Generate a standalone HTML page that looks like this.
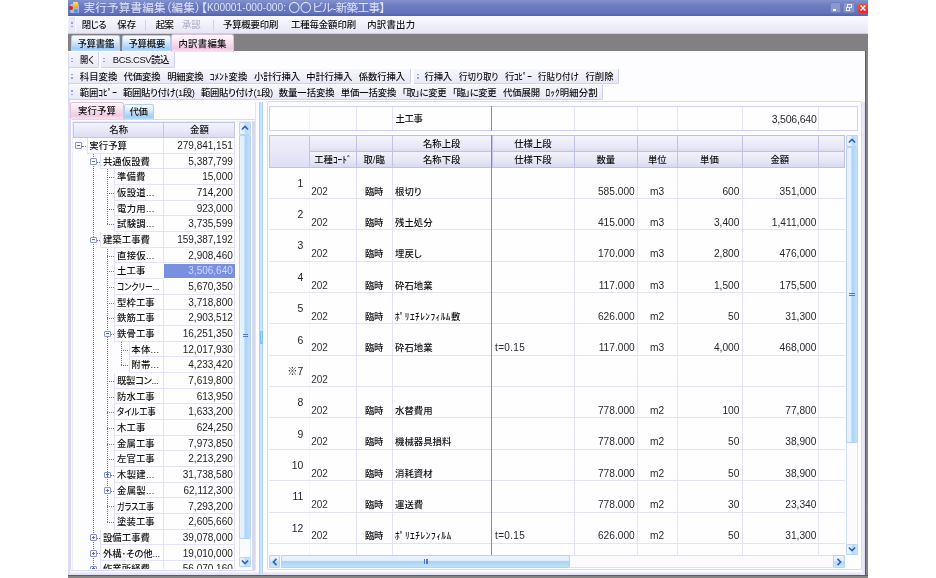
<!DOCTYPE html>
<html lang="ja"><head><meta charset="utf-8"><title>実行予算書編集</title>
<style>
html,body{margin:0;padding:0;background:#fff;}
body{width:936px;height:578px;position:relative;overflow:hidden;font-family:"Liberation Sans","Noto Sans CJK JP",sans-serif;}
div,span,svg{position:absolute;display:block;}
.t{white-space:nowrap;font-size:9.4px;line-height:14px;font-feature-settings:"palt";font-weight:500;}
.n{font-weight:400;}
.n{font-family:"Liberation Sans","Noto Sans CJK JP",sans-serif;}
</style></head>
<body>
<div id="root" style="left:0;top:0;width:936px;height:578px;filter:blur(0.4px);">
<div style="left:68px;top:0px;width:800px;height:578px;background:#868486;"></div>
<div style="left:68px;top:33.6px;width:800px;height:18px;background:#828082;"></div>
<div style="left:864.8px;top:51.3px;width:1.3px;height:524.7px;background:#5e5c5e;"></div>
<div style="left:68px;top:574.8px;width:800px;height:1.2px;background:#5e5c5e;"></div>
<div style="left:68px;top:51.3px;width:796.9px;height:523.5px;background:#fdfcff;"></div>
<div style="left:68px;top:571.8px;width:796.6px;height:3px;background:linear-gradient(#f1f1fb,#dedef4);"></div>
<div style="left:861.2px;top:102px;width:3.4px;height:472.8px;background:linear-gradient(90deg,#f3f3fc,#dedef4);"></div>
<div style="left:68px;top:51.5px;width:1.6px;height:523px;background:#dcdcf3;"></div>
<div style="left:68px;top:0px;width:800px;height:16.4px;background:linear-gradient(#8392cd 0%,#6d7cc0 35%,#6373ba 80%,#5161ad 100%);"></div>
<div style="left:69.6px;top:3.5px;width:9px;height:9.5px;background:#a9b6dc;border-radius:1px;"></div>
<div style="left:73.3px;top:2.2px;width:5.2px;height:5.6px;background:linear-gradient(#ffe860,#f4a400);border-radius:1px;"></div>
<div style="left:69.2px;top:5.6px;width:4.2px;height:4.6px;background:#d8281c;border-radius:50%;"></div>
<div style="left:73.6px;top:9px;width:4px;height:4px;background:#3f94f0;border-radius:50%;"></div>
<span id="t1" class="t" style="left:83.4px;top:0.6px;font-size:11.6px;line-height:14px;color:#dde2f6;letter-spacing:0.16px;font-weight:400;">実行予算書編集（編集）【</span>
<span id="t2" class="t" style="left:207px;top:0.9px;font-size:10.2px;line-height:14px;color:#dde2f6;letter-spacing:0.02px;font-weight:400;">K00001-000-000:</span>
<span id="t3" class="t" style="left:288.4px;top:0.6px;font-size:11.6px;line-height:14px;color:#dde2f6;letter-spacing:-0px;font-weight:400;">〇〇</span>
<span id="t4" class="t" style="left:312.2px;top:0.6px;font-size:11.6px;line-height:14px;color:#dde2f6;letter-spacing:-0.63px;font-weight:400;">ビル-新築工事】</span>
<div style="left:830px;top:2.2px;width:11px;height:10.5px;background:#8b97cf;border:1px solid #7380c0;border-radius:2px;box-sizing:border-box;"></div>
<div style="left:832.6px;top:9.3px;width:3.8px;height:1.4px;background:#f0f2fb;"></div>
<div style="left:843.2px;top:2.2px;width:11.6px;height:10.5px;background:#8b97cf;border:1px solid #7380c0;border-radius:2px;box-sizing:border-box;"></div>
<div style="left:847.4px;top:4.2px;width:4.6px;height:3.8px;border:0.9px solid #e8ebf8;border-top-width:1.4px;box-sizing:border-box;"></div>
<div style="left:845.6px;top:6.6px;width:4.6px;height:4px;border:0.9px solid #e8ebf8;border-top-width:1.4px;box-sizing:border-box;background:#7c88c6;"></div>
<div style="left:858px;top:2.6px;width:10px;height:10px;background:linear-gradient(#f4574d,#e8281e);border-radius:2px 0 0 2px;"></div>
<svg style="left:860.2px;top:4.6px;width:6px;height:6px" viewBox="0 0 6 6"><path d="M0.6 0.6L5.4 5.4M5.4 0.6L0.6 5.4" stroke="#fff" stroke-width="1.35" fill="none"/></svg>
<div style="left:68px;top:16.4px;width:800px;height:17.2px;background:linear-gradient(#f9f9fe 0%,#f0f0fb 50%,#e6e6f7 100%);border-bottom:1px solid #c9cbe9;box-sizing:border-box;"></div>
<div style="left:68.6px;top:17.4px;width:6.6px;height:15px;background:#e7e7f7;border-right:1px solid #f8f8ff;"></div>
<div style="left:70.8px;top:22.4px;width:2px;height:1.5px;background:#97a4de;"></div>
<div style="left:70.8px;top:25.8px;width:2px;height:1.5px;background:#97a4de;"></div>
<span id="t5" class="t" style="left:81.8px;top:18.2px;font-size:9.4px;line-height:14px;color:#111;letter-spacing:-0.63px;">閉じる</span>
<span id="t6" class="t" style="left:117.3px;top:18.2px;font-size:9.4px;line-height:14px;color:#111;letter-spacing:-0.04px;">保存</span>
<span id="t7" class="t" style="left:155.8px;top:18.2px;font-size:9.4px;line-height:14px;color:#111;letter-spacing:-0.64px;">起案</span>
<span id="t8" class="t" style="left:182px;top:18.2px;font-size:9.4px;line-height:14px;color:#b4b4c8;letter-spacing:-0.11px;">承認</span>
<span id="t9" class="t" style="left:223px;top:18.2px;font-size:9.4px;line-height:14px;color:#111;letter-spacing:-0.19px;">予算概要印刷</span>
<span id="t10" class="t" style="left:291px;top:18.2px;font-size:9.4px;line-height:14px;color:#111;letter-spacing:-0.1px;">工種毎金額印刷</span>
<span id="t11" class="t" style="left:367.2px;top:18.2px;font-size:9.4px;line-height:14px;color:#111;letter-spacing:0.27px;">内訳書出力</span>
<div style="left:145.2px;top:19.5px;width:1px;height:11.5px;background:#cfd1ea;"></div>
<div style="left:212.6px;top:19.5px;width:1px;height:11.5px;background:#cfd1ea;"></div>
<div style="left:71px;top:35.2px;width:49.4px;height:16.3px;background:linear-gradient(#fbfdff 0%,#dcecfd 35%,#9fcdf8 85%,#badcfa 100%);border:1px solid #b4d0ee;border-bottom:none;border-radius:2.5px 2.5px 0 0;box-sizing:border-box;"></div>
<span id="t12" class="t" style="left:77.4px;top:36.75px;font-size:9.4px;line-height:14px;color:#111;letter-spacing:-0.15px;">予算書鑑</span>
<div style="left:122px;top:35.2px;width:49.2px;height:16.3px;background:linear-gradient(#fbfdff 0%,#dcecfd 35%,#9fcdf8 85%,#badcfa 100%);border:1px solid #b4d0ee;border-bottom:none;border-radius:2.5px 2.5px 0 0;box-sizing:border-box;"></div>
<span id="t13" class="t" style="left:128.4px;top:36.75px;font-size:9.4px;line-height:14px;color:#111;letter-spacing:-0.2px;">予算概要</span>
<div style="left:171.2px;top:34.2px;width:62.8px;height:17.9px;background:linear-gradient(#fffafd 0%,#f8e2f1 40%,#f0c9e3 80%,#f8e4f2 100%);border:1px solid #e0c0d8;border-bottom:none;border-radius:2.5px 2.5px 0 0;box-sizing:border-box;"></div>
<span id="t14" class="t" style="left:178.4px;top:36.55px;font-size:9.4px;line-height:14px;color:#111;letter-spacing:0.29px;">内訳書編集</span>
<div style="left:68.6px;top:52.4px;width:30.2px;height:15.4px;background:linear-gradient(#f6f6fd,#e9e9f8);border-right:1px solid #cfd0ec;border-bottom:1px solid #cfd0ec;box-sizing:border-box;border-radius:0 0 2px 0;"></div>
<div style="left:71px;top:57.5px;width:2px;height:1.5px;background:#97a4de;"></div>
<div style="left:71px;top:60.9px;width:2px;height:1.5px;background:#97a4de;"></div>
<div style="left:101px;top:52.4px;width:73.8px;height:15.4px;background:linear-gradient(#f6f6fd,#e9e9f8);border-right:1px solid #cfd0ec;border-bottom:1px solid #cfd0ec;box-sizing:border-box;border-radius:0 0 2px 0;"></div>
<div style="left:103.4px;top:57.5px;width:2px;height:1.5px;background:#97a4de;"></div>
<div style="left:103.4px;top:60.9px;width:2px;height:1.5px;background:#97a4de;"></div>
<span id="t15" class="t" style="left:79.6px;top:53.2px;font-size:9.4px;line-height:14px;color:#111;transform:scaleX(0.885);transform-origin:0 50%;">開く</span>
<span id="t16" class="t" style="left:112.8px;top:53.2px;font-size:9.4px;line-height:14px;color:#111;letter-spacing:-0.41px;">BCS.CSV読込</span>
<div style="left:68.6px;top:68.8px;width:342.8px;height:15.4px;background:linear-gradient(#f6f6fd,#e9e9f8);border-right:1px solid #cfd0ec;border-bottom:1px solid #cfd0ec;box-sizing:border-box;border-radius:0 0 2px 0;"></div>
<div style="left:71px;top:73.9px;width:2px;height:1.5px;background:#97a4de;"></div>
<div style="left:71px;top:77.3px;width:2px;height:1.5px;background:#97a4de;"></div>
<div style="left:414.4px;top:68.8px;width:204.4px;height:15.4px;background:linear-gradient(#f6f6fd,#e9e9f8);border-right:1px solid #cfd0ec;border-bottom:1px solid #cfd0ec;box-sizing:border-box;border-radius:0 0 2px 0;"></div>
<div style="left:416.8px;top:73.9px;width:2px;height:1.5px;background:#97a4de;"></div>
<div style="left:416.8px;top:77.3px;width:2px;height:1.5px;background:#97a4de;"></div>
<span id="t17" class="t" style="left:79.8px;top:69.6px;font-size:9.4px;line-height:14px;color:#111;letter-spacing:-0px;">科目変換</span>
<span id="t18" class="t" style="left:123.5px;top:69.6px;font-size:9.4px;line-height:14px;color:#111;letter-spacing:-0.12px;">代価変換</span>
<span id="t19" class="t" style="left:167.2px;top:69.6px;font-size:9.4px;line-height:14px;color:#111;letter-spacing:-0.32px;">明細変換</span>
<span id="t20" class="t" style="left:209.8px;top:69.6px;font-size:9.4px;line-height:14px;color:#111;letter-spacing:0.01px;">ｺﾒﾝﾄ変換</span>
<span id="t21" class="t" style="left:254px;top:69.6px;font-size:9.4px;line-height:14px;color:#111;letter-spacing:-0.2px;">小計行挿入</span>
<span id="t22" class="t" style="left:306.3px;top:69.6px;font-size:9.4px;line-height:14px;color:#111;letter-spacing:-0.22px;">中計行挿入</span>
<span id="t23" class="t" style="left:358.8px;top:69.6px;font-size:9.4px;line-height:14px;color:#111;letter-spacing:-0.11px;">係数行挿入</span>
<span id="t24" class="t" style="left:424.6px;top:69.6px;font-size:9.4px;line-height:14px;color:#111;letter-spacing:-0.3px;">行挿入</span>
<span id="t25" class="t" style="left:458.8px;top:69.6px;font-size:9.4px;line-height:14px;color:#111;transform:scaleX(0.901);transform-origin:0 50%;">行切り取り</span>
<span id="t26" class="t" style="left:505px;top:69.6px;font-size:9.4px;line-height:14px;color:#111;letter-spacing:-0.39px;">行ｺﾋﾟｰ</span>
<span id="t27" class="t" style="left:538px;top:69.6px;font-size:9.4px;line-height:14px;color:#111;transform:scaleX(0.905);transform-origin:0 50%;">行貼り付け</span>
<span id="t28" class="t" style="left:585.4px;top:69.6px;font-size:9.4px;line-height:14px;color:#111;letter-spacing:0.02px;">行削除</span>
<div style="left:68.6px;top:85.2px;width:534.6px;height:15.2px;background:linear-gradient(#f6f6fd,#e9e9f8);border-right:1px solid #cfd0ec;border-bottom:1px solid #cfd0ec;box-sizing:border-box;border-radius:0 0 2px 0;"></div>
<div style="left:71px;top:90.2px;width:2px;height:1.5px;background:#97a4de;"></div>
<div style="left:71px;top:93.6px;width:2px;height:1.5px;background:#97a4de;"></div>
<span id="t29" class="t" style="left:79.8px;top:85.8px;font-size:9.4px;line-height:14px;color:#111;letter-spacing:-0.09px;">範囲ｺﾋﾟｰ</span>
<span id="t30" class="t" style="left:123px;top:85.8px;font-size:9.4px;line-height:14px;color:#111;letter-spacing:-0.37px;">範囲貼り付け(1段)</span>
<span id="t31" class="t" style="left:201px;top:85.8px;font-size:9.4px;line-height:14px;color:#111;letter-spacing:-0.34px;">範囲貼り付け(1段)</span>
<span id="t32" class="t" style="left:278.8px;top:85.8px;font-size:9.4px;line-height:14px;color:#111;letter-spacing:-0.09px;">数量一括変換</span>
<span id="t33" class="t" style="left:340.8px;top:85.8px;font-size:9.4px;line-height:14px;color:#111;letter-spacing:-0.12px;">単価一括変換</span>
<span id="t34" class="t" style="left:402px;top:85.8px;font-size:9.4px;line-height:14px;color:#111;letter-spacing:-0.39px;">「取」に変更</span>
<span id="t35" class="t" style="left:452.4px;top:85.8px;font-size:9.4px;line-height:14px;color:#111;letter-spacing:-0.46px;">「臨」に変更</span>
<span id="t36" class="t" style="left:503px;top:85.8px;font-size:9.4px;line-height:14px;color:#111;letter-spacing:-0.15px;">代価展開</span>
<span id="t37" class="t" style="left:545.4px;top:85.8px;font-size:9.4px;line-height:14px;color:#111;letter-spacing:0.1px;">ﾛｯｸ明細分割</span>
<div style="left:70.4px;top:102.2px;width:54px;height:16.8px;background:linear-gradient(#fffafd 0%,#f8e2f1 40%,#f0c9e3 80%,#f8e4f2 100%);border:1px solid #e0c0d8;border-bottom:none;border-radius:2.5px 2.5px 0 0;box-sizing:border-box;"></div>
<span id="t38" class="t" style="left:78px;top:104px;font-size:9.4px;line-height:14px;color:#111;letter-spacing:0.14px;">実行予算</span>
<div style="left:124.4px;top:104px;width:30px;height:15px;background:linear-gradient(#fbfdff 0%,#dcecfd 35%,#9fcdf8 85%,#badcfa 100%);border:1px solid #b4d0ee;border-bottom:none;border-radius:2.5px 2.5px 0 0;box-sizing:border-box;"></div>
<span id="t39" class="t" style="left:129.4px;top:104.9px;font-size:9.4px;line-height:14px;color:#111;letter-spacing:-0.24px;">代価</span>
<div style="left:70px;top:119px;width:186.4px;height:452px;border:1.6px solid #d9d9f3;box-sizing:border-box;background:#fdfcff;border-radius:2px;"></div>
<div style="left:71.6px;top:120.6px;width:183.2px;height:449px;border:1px solid #ededfa;border-bottom:none;box-sizing:border-box;"></div>
<div style="left:73.4px;top:122.3px;width:90.6px;height:15.5px;background:linear-gradient(#f4f4fc 0%,#e9e9f8 50%,#dcdcf2 100%);border:1px solid #c3c6e6;box-sizing:border-box;"></div>
<div style="left:163px;top:122.3px;width:72px;height:15.5px;background:linear-gradient(#f4f4fc 0%,#e9e9f8 50%,#dcdcf2 100%);border:1px solid #c3c6e6;box-sizing:border-box;"></div>
<span id="t40" class="t" style="left:73.4px;top:123px;font-size:9.4px;line-height:14px;color:#111;width:90.6px;text-align:center;">名称</span>
<span id="t41" class="t" style="left:164px;top:123px;font-size:9.4px;line-height:14px;color:#111;width:71px;text-align:center;">金額</span>
<div style="left:0;top:0;width:936px;height:568.7px;overflow:hidden;">
<div style="left:93.4px;top:150.05px;width:0px;height:418.93px;border-left:1px dotted #77777f;"></div>
<div style="left:107.2px;top:165.72px;width:0px;height:58.52px;border-left:1px dotted #77777f;"></div>
<div style="left:107.2px;top:244.07px;width:0px;height:277.89px;border-left:1px dotted #77777f;"></div>
<div style="left:121.4px;top:338.09px;width:0px;height:27.17px;border-left:1px dotted #77777f;"></div>
<div style="left:86.6px;top:138.05px;width:77.4px;height:15.67px;border-left:1px solid #e2e2f8;border-bottom:1px solid #e2e2f8;box-sizing:border-box;background:#fefdff;"></div>
<div style="left:163px;top:138.05px;width:72px;height:15.67px;border:1px solid #e2e2f8;border-top:none;box-sizing:border-box;background:#fefdff;"></div>
<div style="left:75.2px;top:142.49px;width:6.8px;height:6.8px;border:1px solid #8a93d2;background:#fbfbff;box-sizing:border-box;border-radius:1px;"></div>
<div style="left:77px;top:145.39px;width:3.2px;height:1px;background:#5a66b8;"></div>
<div style="left:82.2px;top:145.89px;width:4px;height:0px;border-top:1px dotted #77777f;"></div>
<span id="t42" class="t" style="left:89.3px;top:139.09px;font-size:9.4px;line-height:14px;color:#111;letter-spacing:0.05px;">実行予算</span>
<span id="t43" class="t n" style="left:164px;top:139.09px;font-size:10px;line-height:14px;color:#222;width:68.8px;text-align:right;">279,841,151</span>
<div style="left:100.2px;top:153.72px;width:63.8px;height:15.67px;border-left:1px solid #e2e2f8;border-bottom:1px solid #e2e2f8;box-sizing:border-box;background:#fefdff;"></div>
<div style="left:163px;top:153.72px;width:72px;height:15.67px;border:1px solid #e2e2f8;border-top:none;box-sizing:border-box;background:#fefdff;"></div>
<div style="left:93.4px;top:161.56px;width:6.3px;height:0px;border-top:1px dotted #77777f;"></div>
<div style="left:90.2px;top:158.16px;width:6.8px;height:6.8px;border:1px solid #8a93d2;background:#fbfbff;box-sizing:border-box;border-radius:1px;"></div>
<div style="left:92px;top:161.06px;width:3.2px;height:1px;background:#5a66b8;"></div>
<span id="t44" class="t" style="left:102.9px;top:154.75px;font-size:9.4px;line-height:14px;color:#111;letter-spacing:0.05px;">共通仮設費</span>
<span id="t45" class="t n" style="left:164px;top:154.75px;font-size:10px;line-height:14px;color:#222;width:68.8px;text-align:right;">5,387,799</span>
<div style="left:114.4px;top:169.39px;width:49.6px;height:15.67px;border-left:1px solid #e2e2f8;border-bottom:1px solid #e2e2f8;box-sizing:border-box;background:#fefdff;"></div>
<div style="left:163px;top:169.39px;width:72px;height:15.67px;border:1px solid #e2e2f8;border-top:none;box-sizing:border-box;background:#fefdff;"></div>
<div style="left:107.2px;top:177.23px;width:6.7px;height:0px;border-top:1px dotted #77777f;"></div>
<span id="t46" class="t" style="left:117.1px;top:170.43px;font-size:9.4px;line-height:14px;color:#111;letter-spacing:0.05px;">準備費</span>
<span id="t47" class="t n" style="left:164px;top:170.43px;font-size:10px;line-height:14px;color:#222;width:68.8px;text-align:right;">15,000</span>
<div style="left:114.4px;top:185.06px;width:49.6px;height:15.67px;border-left:1px solid #e2e2f8;border-bottom:1px solid #e2e2f8;box-sizing:border-box;background:#fefdff;"></div>
<div style="left:163px;top:185.06px;width:72px;height:15.67px;border:1px solid #e2e2f8;border-top:none;box-sizing:border-box;background:#fefdff;"></div>
<div style="left:107.2px;top:192.9px;width:6.7px;height:0px;border-top:1px dotted #77777f;"></div>
<span id="t48" class="t" style="left:117.1px;top:186.09px;font-size:9.4px;line-height:14px;color:#111;letter-spacing:0.24px;">仮設道...</span>
<span id="t49" class="t n" style="left:164px;top:186.09px;font-size:10px;line-height:14px;color:#222;width:68.8px;text-align:right;">714,200</span>
<div style="left:114.4px;top:200.73px;width:49.6px;height:15.67px;border-left:1px solid #e2e2f8;border-bottom:1px solid #e2e2f8;box-sizing:border-box;background:#fefdff;"></div>
<div style="left:163px;top:200.73px;width:72px;height:15.67px;border:1px solid #e2e2f8;border-top:none;box-sizing:border-box;background:#fefdff;"></div>
<div style="left:107.2px;top:208.57px;width:6.7px;height:0px;border-top:1px dotted #77777f;"></div>
<span id="t50" class="t" style="left:117.1px;top:201.77px;font-size:9.4px;line-height:14px;color:#111;letter-spacing:0.24px;">電力用...</span>
<span id="t51" class="t n" style="left:164px;top:201.77px;font-size:10px;line-height:14px;color:#222;width:68.8px;text-align:right;">923,000</span>
<div style="left:114.4px;top:216.4px;width:49.6px;height:15.67px;border-left:1px solid #e2e2f8;border-bottom:1px solid #e2e2f8;box-sizing:border-box;background:#fefdff;"></div>
<div style="left:163px;top:216.4px;width:72px;height:15.67px;border:1px solid #e2e2f8;border-top:none;box-sizing:border-box;background:#fefdff;"></div>
<div style="left:107.2px;top:224.24px;width:6.7px;height:0px;border-top:1px dotted #77777f;"></div>
<span id="t52" class="t" style="left:117.1px;top:217.44px;font-size:9.4px;line-height:14px;color:#111;letter-spacing:0.24px;">試験調...</span>
<span id="t53" class="t n" style="left:164px;top:217.44px;font-size:10px;line-height:14px;color:#222;width:68.8px;text-align:right;">3,735,599</span>
<div style="left:100.2px;top:232.07px;width:63.8px;height:15.67px;border-left:1px solid #e2e2f8;border-bottom:1px solid #e2e2f8;box-sizing:border-box;background:#fefdff;"></div>
<div style="left:163px;top:232.07px;width:72px;height:15.67px;border:1px solid #e2e2f8;border-top:none;box-sizing:border-box;background:#fefdff;"></div>
<div style="left:93.4px;top:239.91px;width:6.3px;height:0px;border-top:1px dotted #77777f;"></div>
<div style="left:90.2px;top:236.5px;width:6.8px;height:6.8px;border:1px solid #8a93d2;background:#fbfbff;box-sizing:border-box;border-radius:1px;"></div>
<div style="left:92px;top:239.41px;width:3.2px;height:1px;background:#5a66b8;"></div>
<span id="t54" class="t" style="left:102.9px;top:233.1px;font-size:9.4px;line-height:14px;color:#111;letter-spacing:0.05px;">建築工事費</span>
<span id="t55" class="t n" style="left:164px;top:233.1px;font-size:10px;line-height:14px;color:#222;width:68.8px;text-align:right;">159,387,192</span>
<div style="left:114.4px;top:247.74px;width:49.6px;height:15.67px;border-left:1px solid #e2e2f8;border-bottom:1px solid #e2e2f8;box-sizing:border-box;background:#fefdff;"></div>
<div style="left:163px;top:247.74px;width:72px;height:15.67px;border:1px solid #e2e2f8;border-top:none;box-sizing:border-box;background:#fefdff;"></div>
<div style="left:107.2px;top:255.58px;width:6.7px;height:0px;border-top:1px dotted #77777f;"></div>
<span id="t56" class="t" style="left:117.1px;top:248.78px;font-size:9.4px;line-height:14px;color:#111;letter-spacing:0.24px;">直接仮...</span>
<span id="t57" class="t n" style="left:164px;top:248.78px;font-size:10px;line-height:14px;color:#222;width:68.8px;text-align:right;">2,908,460</span>
<div style="left:114.4px;top:263.41px;width:49.6px;height:15.67px;border-left:1px solid #e2e2f8;border-bottom:1px solid #e2e2f8;box-sizing:border-box;background:#fefdff;"></div>
<div style="left:164.4px;top:263.61px;width:70.8px;height:14.77px;background:#7990e0;"></div>
<div style="left:107.2px;top:271.25px;width:6.7px;height:0px;border-top:1px dotted #77777f;"></div>
<span id="t58" class="t" style="left:117.1px;top:264.44px;font-size:9.4px;line-height:14px;color:#111;letter-spacing:0.05px;">土工事</span>
<span id="t59" class="t n" style="left:164px;top:264.44px;font-size:10px;line-height:14px;color:#d0d9fc;width:68.8px;text-align:right;">3,506,640</span>
<div style="left:114.4px;top:279.08px;width:49.6px;height:15.67px;border-left:1px solid #e2e2f8;border-bottom:1px solid #e2e2f8;box-sizing:border-box;background:#fefdff;"></div>
<div style="left:163px;top:279.08px;width:72px;height:15.67px;border:1px solid #e2e2f8;border-top:none;box-sizing:border-box;background:#fefdff;"></div>
<div style="left:107.2px;top:286.92px;width:6.7px;height:0px;border-top:1px dotted #77777f;"></div>
<span id="t60" class="t" style="left:117.1px;top:280.12px;font-size:9.4px;line-height:14px;color:#111;transform:scaleX(0.840);transform-origin:0 50%;">コンクリー...</span>
<span id="t61" class="t n" style="left:164px;top:280.12px;font-size:10px;line-height:14px;color:#222;width:68.8px;text-align:right;">5,670,350</span>
<div style="left:114.4px;top:294.75px;width:49.6px;height:15.67px;border-left:1px solid #e2e2f8;border-bottom:1px solid #e2e2f8;box-sizing:border-box;background:#fefdff;"></div>
<div style="left:163px;top:294.75px;width:72px;height:15.67px;border:1px solid #e2e2f8;border-top:none;box-sizing:border-box;background:#fefdff;"></div>
<div style="left:107.2px;top:302.58px;width:6.7px;height:0px;border-top:1px dotted #77777f;"></div>
<span id="t62" class="t" style="left:117.1px;top:295.78px;font-size:9.4px;line-height:14px;color:#111;letter-spacing:0.05px;">型枠工事</span>
<span id="t63" class="t n" style="left:164px;top:295.78px;font-size:10px;line-height:14px;color:#222;width:68.8px;text-align:right;">3,718,800</span>
<div style="left:114.4px;top:310.42px;width:49.6px;height:15.67px;border-left:1px solid #e2e2f8;border-bottom:1px solid #e2e2f8;box-sizing:border-box;background:#fefdff;"></div>
<div style="left:163px;top:310.42px;width:72px;height:15.67px;border:1px solid #e2e2f8;border-top:none;box-sizing:border-box;background:#fefdff;"></div>
<div style="left:107.2px;top:318.25px;width:6.7px;height:0px;border-top:1px dotted #77777f;"></div>
<span id="t64" class="t" style="left:117.1px;top:311.45px;font-size:9.4px;line-height:14px;color:#111;letter-spacing:0.05px;">鉄筋工事</span>
<span id="t65" class="t n" style="left:164px;top:311.45px;font-size:10px;line-height:14px;color:#222;width:68.8px;text-align:right;">2,903,512</span>
<div style="left:114.4px;top:326.09px;width:49.6px;height:15.67px;border-left:1px solid #e2e2f8;border-bottom:1px solid #e2e2f8;box-sizing:border-box;background:#fefdff;"></div>
<div style="left:163px;top:326.09px;width:72px;height:15.67px;border:1px solid #e2e2f8;border-top:none;box-sizing:border-box;background:#fefdff;"></div>
<div style="left:107.2px;top:333.93px;width:6.7px;height:0px;border-top:1px dotted #77777f;"></div>
<div style="left:104px;top:330.53px;width:6.8px;height:6.8px;border:1px solid #8a93d2;background:#fbfbff;box-sizing:border-box;border-radius:1px;"></div>
<div style="left:105.8px;top:333.43px;width:3.2px;height:1px;background:#5a66b8;"></div>
<span id="t66" class="t" style="left:117.1px;top:327.12px;font-size:9.4px;line-height:14px;color:#111;letter-spacing:0.05px;">鉄骨工事</span>
<span id="t67" class="t n" style="left:164px;top:327.12px;font-size:10px;line-height:14px;color:#222;width:68.8px;text-align:right;">16,251,350</span>
<div style="left:128.6px;top:341.76px;width:35.4px;height:15.67px;border-left:1px solid #e2e2f8;border-bottom:1px solid #e2e2f8;box-sizing:border-box;background:#fefdff;"></div>
<div style="left:163px;top:341.76px;width:72px;height:15.67px;border:1px solid #e2e2f8;border-top:none;box-sizing:border-box;background:#fefdff;"></div>
<div style="left:121.4px;top:349.59px;width:6.7px;height:0px;border-top:1px dotted #77777f;"></div>
<span id="t68" class="t" style="left:131.3px;top:342.79px;font-size:9.4px;line-height:14px;color:#111;letter-spacing:0.28px;">本体...</span>
<span id="t69" class="t n" style="left:164px;top:342.79px;font-size:10px;line-height:14px;color:#222;width:68.8px;text-align:right;">12,017,930</span>
<div style="left:128.6px;top:357.43px;width:35.4px;height:15.67px;border-left:1px solid #e2e2f8;border-bottom:1px solid #e2e2f8;box-sizing:border-box;background:#fefdff;"></div>
<div style="left:163px;top:357.43px;width:72px;height:15.67px;border:1px solid #e2e2f8;border-top:none;box-sizing:border-box;background:#fefdff;"></div>
<div style="left:121.4px;top:365.26px;width:6.7px;height:0px;border-top:1px dotted #77777f;"></div>
<span id="t70" class="t" style="left:131.3px;top:358.46px;font-size:9.4px;line-height:14px;color:#111;letter-spacing:0.28px;">附帯...</span>
<span id="t71" class="t n" style="left:164px;top:358.46px;font-size:10px;line-height:14px;color:#222;width:68.8px;text-align:right;">4,233,420</span>
<div style="left:114.4px;top:373.1px;width:49.6px;height:15.67px;border-left:1px solid #e2e2f8;border-bottom:1px solid #e2e2f8;box-sizing:border-box;background:#fefdff;"></div>
<div style="left:163px;top:373.1px;width:72px;height:15.67px;border:1px solid #e2e2f8;border-top:none;box-sizing:border-box;background:#fefdff;"></div>
<div style="left:107.2px;top:380.94px;width:6.7px;height:0px;border-top:1px dotted #77777f;"></div>
<span id="t72" class="t" style="left:117.1px;top:374.13px;font-size:9.4px;line-height:14px;color:#111;letter-spacing:-0.37px;">既製コン...</span>
<span id="t73" class="t n" style="left:164px;top:374.13px;font-size:10px;line-height:14px;color:#222;width:68.8px;text-align:right;">7,619,800</span>
<div style="left:114.4px;top:388.77px;width:49.6px;height:15.67px;border-left:1px solid #e2e2f8;border-bottom:1px solid #e2e2f8;box-sizing:border-box;background:#fefdff;"></div>
<div style="left:163px;top:388.77px;width:72px;height:15.67px;border:1px solid #e2e2f8;border-top:none;box-sizing:border-box;background:#fefdff;"></div>
<div style="left:107.2px;top:396.6px;width:6.7px;height:0px;border-top:1px dotted #77777f;"></div>
<span id="t74" class="t" style="left:117.1px;top:389.8px;font-size:9.4px;line-height:14px;color:#111;letter-spacing:0.05px;">防水工事</span>
<span id="t75" class="t n" style="left:164px;top:389.8px;font-size:10px;line-height:14px;color:#222;width:68.8px;text-align:right;">613,950</span>
<div style="left:114.4px;top:404.44px;width:49.6px;height:15.67px;border-left:1px solid #e2e2f8;border-bottom:1px solid #e2e2f8;box-sizing:border-box;background:#fefdff;"></div>
<div style="left:163px;top:404.44px;width:72px;height:15.67px;border:1px solid #e2e2f8;border-top:none;box-sizing:border-box;background:#fefdff;"></div>
<div style="left:107.2px;top:412.27px;width:6.7px;height:0px;border-top:1px dotted #77777f;"></div>
<span id="t76" class="t" style="left:117.1px;top:405.47px;font-size:9.4px;line-height:14px;color:#111;transform:scaleX(0.878);transform-origin:0 50%;">タイル工事</span>
<span id="t77" class="t n" style="left:164px;top:405.47px;font-size:10px;line-height:14px;color:#222;width:68.8px;text-align:right;">1,633,200</span>
<div style="left:114.4px;top:420.11px;width:49.6px;height:15.67px;border-left:1px solid #e2e2f8;border-bottom:1px solid #e2e2f8;box-sizing:border-box;background:#fefdff;"></div>
<div style="left:163px;top:420.11px;width:72px;height:15.67px;border:1px solid #e2e2f8;border-top:none;box-sizing:border-box;background:#fefdff;"></div>
<div style="left:107.2px;top:427.94px;width:6.7px;height:0px;border-top:1px dotted #77777f;"></div>
<span id="t78" class="t" style="left:117.1px;top:421.14px;font-size:9.4px;line-height:14px;color:#111;letter-spacing:0.05px;">木工事</span>
<span id="t79" class="t n" style="left:164px;top:421.14px;font-size:10px;line-height:14px;color:#222;width:68.8px;text-align:right;">624,250</span>
<div style="left:114.4px;top:435.78px;width:49.6px;height:15.67px;border-left:1px solid #e2e2f8;border-bottom:1px solid #e2e2f8;box-sizing:border-box;background:#fefdff;"></div>
<div style="left:163px;top:435.78px;width:72px;height:15.67px;border:1px solid #e2e2f8;border-top:none;box-sizing:border-box;background:#fefdff;"></div>
<div style="left:107.2px;top:443.62px;width:6.7px;height:0px;border-top:1px dotted #77777f;"></div>
<span id="t80" class="t" style="left:117.1px;top:436.81px;font-size:9.4px;line-height:14px;color:#111;letter-spacing:0.05px;">金属工事</span>
<span id="t81" class="t n" style="left:164px;top:436.81px;font-size:10px;line-height:14px;color:#222;width:68.8px;text-align:right;">7,973,850</span>
<div style="left:114.4px;top:451.45px;width:49.6px;height:15.67px;border-left:1px solid #e2e2f8;border-bottom:1px solid #e2e2f8;box-sizing:border-box;background:#fefdff;"></div>
<div style="left:163px;top:451.45px;width:72px;height:15.67px;border:1px solid #e2e2f8;border-top:none;box-sizing:border-box;background:#fefdff;"></div>
<div style="left:107.2px;top:459.28px;width:6.7px;height:0px;border-top:1px dotted #77777f;"></div>
<span id="t82" class="t" style="left:117.1px;top:452.48px;font-size:9.4px;line-height:14px;color:#111;letter-spacing:0.05px;">左官工事</span>
<span id="t83" class="t n" style="left:164px;top:452.48px;font-size:10px;line-height:14px;color:#222;width:68.8px;text-align:right;">2,213,290</span>
<div style="left:114.4px;top:467.12px;width:49.6px;height:15.67px;border-left:1px solid #e2e2f8;border-bottom:1px solid #e2e2f8;box-sizing:border-box;background:#fefdff;"></div>
<div style="left:163px;top:467.12px;width:72px;height:15.67px;border:1px solid #e2e2f8;border-top:none;box-sizing:border-box;background:#fefdff;"></div>
<div style="left:107.2px;top:474.95px;width:6.7px;height:0px;border-top:1px dotted #77777f;"></div>
<div style="left:104px;top:471.56px;width:6.8px;height:6.8px;border:1px solid #8a93d2;background:#fbfbff;box-sizing:border-box;border-radius:1px;"></div>
<div style="left:105.8px;top:474.45px;width:3.2px;height:1px;background:#5a66b8;"></div>
<div style="left:106.9px;top:473.35px;width:1px;height:3.2px;background:#5a66b8;"></div>
<span id="t84" class="t" style="left:117.1px;top:468.15px;font-size:9.4px;line-height:14px;color:#111;letter-spacing:0.24px;">木製建...</span>
<span id="t85" class="t n" style="left:164px;top:468.15px;font-size:10px;line-height:14px;color:#222;width:68.8px;text-align:right;">31,738,580</span>
<div style="left:114.4px;top:482.79px;width:49.6px;height:15.67px;border-left:1px solid #e2e2f8;border-bottom:1px solid #e2e2f8;box-sizing:border-box;background:#fefdff;"></div>
<div style="left:163px;top:482.79px;width:72px;height:15.67px;border:1px solid #e2e2f8;border-top:none;box-sizing:border-box;background:#fefdff;"></div>
<div style="left:107.2px;top:490.62px;width:6.7px;height:0px;border-top:1px dotted #77777f;"></div>
<div style="left:104px;top:487.23px;width:6.8px;height:6.8px;border:1px solid #8a93d2;background:#fbfbff;box-sizing:border-box;border-radius:1px;"></div>
<div style="left:105.8px;top:490.12px;width:3.2px;height:1px;background:#5a66b8;"></div>
<div style="left:106.9px;top:489.02px;width:1px;height:3.2px;background:#5a66b8;"></div>
<span id="t86" class="t" style="left:117.1px;top:483.82px;font-size:9.4px;line-height:14px;color:#111;letter-spacing:0.24px;">金属製...</span>
<span id="t87" class="t n" style="left:164px;top:483.82px;font-size:10px;line-height:14px;color:#222;width:68.8px;text-align:right;">62,112,300</span>
<div style="left:114.4px;top:498.46px;width:49.6px;height:15.67px;border-left:1px solid #e2e2f8;border-bottom:1px solid #e2e2f8;box-sizing:border-box;background:#fefdff;"></div>
<div style="left:163px;top:498.46px;width:72px;height:15.67px;border:1px solid #e2e2f8;border-top:none;box-sizing:border-box;background:#fefdff;"></div>
<div style="left:107.2px;top:506.3px;width:6.7px;height:0px;border-top:1px dotted #77777f;"></div>
<span id="t88" class="t" style="left:117.1px;top:499.5px;font-size:9.4px;line-height:14px;color:#111;transform:scaleX(0.840);transform-origin:0 50%;">ガラス工事</span>
<span id="t89" class="t n" style="left:164px;top:499.5px;font-size:10px;line-height:14px;color:#222;width:68.8px;text-align:right;">7,293,200</span>
<div style="left:114.4px;top:514.13px;width:49.6px;height:15.67px;border-left:1px solid #e2e2f8;border-bottom:1px solid #e2e2f8;box-sizing:border-box;background:#fefdff;"></div>
<div style="left:163px;top:514.13px;width:72px;height:15.67px;border:1px solid #e2e2f8;border-top:none;box-sizing:border-box;background:#fefdff;"></div>
<div style="left:107.2px;top:521.97px;width:6.7px;height:0px;border-top:1px dotted #77777f;"></div>
<span id="t90" class="t" style="left:117.1px;top:515.17px;font-size:9.4px;line-height:14px;color:#111;letter-spacing:0.05px;">塗装工事</span>
<span id="t91" class="t n" style="left:164px;top:515.17px;font-size:10px;line-height:14px;color:#222;width:68.8px;text-align:right;">2,605,660</span>
<div style="left:100.2px;top:529.8px;width:63.8px;height:15.67px;border-left:1px solid #e2e2f8;border-bottom:1px solid #e2e2f8;box-sizing:border-box;background:#fefdff;"></div>
<div style="left:163px;top:529.8px;width:72px;height:15.67px;border:1px solid #e2e2f8;border-top:none;box-sizing:border-box;background:#fefdff;"></div>
<div style="left:93.4px;top:537.63px;width:6.3px;height:0px;border-top:1px dotted #77777f;"></div>
<div style="left:90.2px;top:534.24px;width:6.8px;height:6.8px;border:1px solid #8a93d2;background:#fbfbff;box-sizing:border-box;border-radius:1px;"></div>
<div style="left:92px;top:537.13px;width:3.2px;height:1px;background:#5a66b8;"></div>
<div style="left:93.1px;top:536.03px;width:1px;height:3.2px;background:#5a66b8;"></div>
<span id="t92" class="t" style="left:102.9px;top:530.84px;font-size:9.4px;line-height:14px;color:#111;letter-spacing:0.05px;">設備工事費</span>
<span id="t93" class="t n" style="left:164px;top:530.84px;font-size:10px;line-height:14px;color:#222;width:68.8px;text-align:right;">39,078,000</span>
<div style="left:100.2px;top:545.47px;width:63.8px;height:15.67px;border-left:1px solid #e2e2f8;border-bottom:1px solid #e2e2f8;box-sizing:border-box;background:#fefdff;"></div>
<div style="left:163px;top:545.47px;width:72px;height:15.67px;border:1px solid #e2e2f8;border-top:none;box-sizing:border-box;background:#fefdff;"></div>
<div style="left:93.4px;top:553.31px;width:6.3px;height:0px;border-top:1px dotted #77777f;"></div>
<div style="left:90.2px;top:549.91px;width:6.8px;height:6.8px;border:1px solid #8a93d2;background:#fbfbff;box-sizing:border-box;border-radius:1px;"></div>
<div style="left:92px;top:552.81px;width:3.2px;height:1px;background:#5a66b8;"></div>
<div style="left:93.1px;top:551.71px;width:1px;height:3.2px;background:#5a66b8;"></div>
<span id="t94" class="t" style="left:102.9px;top:546.51px;font-size:9.4px;line-height:14px;color:#111;letter-spacing:-0.1px;">外構･その他...</span>
<span id="t95" class="t n" style="left:164px;top:546.51px;font-size:10px;line-height:14px;color:#222;width:68.8px;text-align:right;">19,010,000</span>
<div style="left:100.2px;top:561.14px;width:63.8px;height:15.67px;border-left:1px solid #e2e2f8;border-bottom:1px solid #e2e2f8;box-sizing:border-box;background:#fefdff;"></div>
<div style="left:163px;top:561.14px;width:72px;height:15.67px;border:1px solid #e2e2f8;border-top:none;box-sizing:border-box;background:#fefdff;"></div>
<div style="left:93.4px;top:568.98px;width:6.3px;height:0px;border-top:1px dotted #77777f;"></div>
<div style="left:90.2px;top:565.58px;width:6.8px;height:6.8px;border:1px solid #8a93d2;background:#fbfbff;box-sizing:border-box;border-radius:1px;"></div>
<div style="left:92px;top:568.48px;width:3.2px;height:1px;background:#5a66b8;"></div>
<div style="left:93.1px;top:567.38px;width:1px;height:3.2px;background:#5a66b8;"></div>
<span id="t96" class="t" style="left:102.9px;top:562.18px;font-size:9.4px;line-height:14px;color:#111;letter-spacing:0.05px;">作業所経費</span>
<span id="t97" class="t n" style="left:164px;top:562.18px;font-size:10px;line-height:14px;color:#222;width:68.8px;text-align:right;">56,070,160</span>
</div>
<div style="left:239.2px;top:122.2px;width:12px;height:445.2px;background:#fbfbff;border:1px solid #d4e4f8;box-sizing:border-box;"></div>
<div style="left:239.2px;top:122.2px;width:12px;height:12.4px;background:linear-gradient(90deg,#eef5fe,#d9eafc 45%,#b9d9f8 55%,#cfe5fb);border:1px solid #b9d5f3;box-sizing:border-box;border-radius:2px;"></div>
<svg style="left:241.2px;top:124.4px;width:8px;height:8px" viewBox="-4 -4 8 8"><path d="M-3.1 1.5L0 -1.6L3.1 1.5" stroke="#2c60c0" stroke-width="1.6" fill="none"/></svg>
<div style="left:239.2px;top:134.8px;width:12px;height:404.6px;background:linear-gradient(90deg,#e9f3fe 0%,#e2effd 40%,#a9d3f8 50%,#c4e0fa 100%);border:1px solid #b4d2f2;box-sizing:border-box;border-radius:2px;"></div>
<div style="left:242.6px;top:334px;width:5.2px;height:1px;background:#4d78c6;"></div>
<div style="left:242.6px;top:336.2px;width:5.2px;height:1px;background:#4d78c6;"></div>
<div style="left:239.2px;top:556.6px;width:12px;height:10.8px;background:linear-gradient(90deg,#eef5fe,#d9eafc 45%,#b9d9f8 55%,#cfe5fb);border:1px solid #b9d5f3;box-sizing:border-box;border-radius:2px;"></div>
<svg style="left:241.2px;top:558px;width:8px;height:8px" viewBox="-4 -4 8 8"><path d="M-3.1 -1.5L0 1.6L3.1 -1.5" stroke="#2c60c0" stroke-width="1.6" fill="none"/></svg>
<div style="left:259.2px;top:102px;width:4.2px;height:471.6px;background:linear-gradient(90deg,#9ccaf5 0%,#cfe6fc 45%,#d6eafc 60%,#9ccaf5 100%);"></div>
<div style="left:259.6px;top:330.6px;width:3.6px;height:13px;background:#7fbdf6;border-radius:1px;"></div>
<div style="left:260.6px;top:332px;width:1.6px;height:10.2px;background:#b4d8fa;"></div>
<div style="left:252.4px;top:121px;width:3.2px;height:449px;background:linear-gradient(90deg,#dcdcee,#d2d2e8);"></div>
<div style="left:255.2px;top:102px;width:1px;height:468px;background:#e4e4f6;"></div>
<div style="left:266.8px;top:101.2px;width:595.6px;height:468.8px;border:1px solid #d9daf2;box-sizing:border-box;border-radius:2px;"></div>
<div style="left:268.8px;top:105.6px;width:589.6px;height:25.6px;border:1px solid #d0d1ee;box-sizing:border-box;background:#fefdff;"></div>
<div style="left:356.4px;top:106.6px;width:1px;height:23.6px;background:#e3e3f8;"></div>
<div style="left:391.8px;top:106.6px;width:1px;height:23.6px;background:#e3e3f8;"></div>
<div style="left:574.3px;top:106.6px;width:1px;height:23.6px;background:#e3e3f8;"></div>
<div style="left:637.3px;top:106.6px;width:1px;height:23.6px;background:#e3e3f8;"></div>
<div style="left:677.3px;top:106.6px;width:1px;height:23.6px;background:#e3e3f8;"></div>
<div style="left:741.5px;top:106.6px;width:1px;height:23.6px;background:#e3e3f8;"></div>
<div style="left:818.2px;top:106.6px;width:1px;height:23.6px;background:#e3e3f8;"></div>
<div style="left:309.4px;top:106.6px;width:1px;height:23.6px;background:#f1f0fb;"></div>
<span id="t98" class="t" style="left:395.4px;top:111.8px;font-size:9.4px;line-height:14px;color:#111;letter-spacing:-0.3px;">土工事</span>
<span id="t99" class="t n" style="left:742px;top:111.6px;font-size:10.5px;line-height:14px;color:#2a2a2a;width:74.6px;text-align:right;letter-spacing:-0.2px;">3,506,640</span>
<div style="left:268.8px;top:135px;width:576.6px;height:32.6px;background:linear-gradient(#f4f4fc 0%,#e6e6f6 40%,#d9d9f0 50%,#f2f2fb 52%,#e4e4f5 85%,#dadaf0 100%);border:1px solid #bfc2e4;box-sizing:border-box;"></div>
<div style="left:269.8px;top:136px;width:39.6px;height:30.6px;background:linear-gradient(#f0f0fb,#e0e0f4);"></div>
<div style="left:309.4px;top:151.3px;width:536px;height:1px;background:#bfc2e4;"></div>
<div style="left:309.4px;top:135px;width:1px;height:32.6px;background:#bfc2e4;"></div>
<div style="left:356.4px;top:135px;width:1px;height:32.6px;background:#bfc2e4;"></div>
<div style="left:391.8px;top:135px;width:1px;height:32.6px;background:#bfc2e4;"></div>
<div style="left:491.6px;top:135px;width:1px;height:32.6px;background:#bfc2e4;"></div>
<div style="left:574.3px;top:135px;width:1px;height:32.6px;background:#bfc2e4;"></div>
<div style="left:637.3px;top:135px;width:1px;height:32.6px;background:#bfc2e4;"></div>
<div style="left:677.3px;top:135px;width:1px;height:32.6px;background:#bfc2e4;"></div>
<div style="left:741.5px;top:135px;width:1px;height:32.6px;background:#bfc2e4;"></div>
<div style="left:818.2px;top:135px;width:1px;height:32.6px;background:#bfc2e4;"></div>
<span id="t100" class="t" style="left:391.8px;top:137.1px;font-size:9.4px;line-height:14px;color:#111;width:99.8px;text-align:center;">名称上段</span>
<span id="t101" class="t" style="left:491.6px;top:137.1px;font-size:9.4px;line-height:14px;color:#111;width:82.7px;text-align:center;">仕様上段</span>
<span id="t102" class="t" style="left:309.4px;top:153px;font-size:9.4px;line-height:14px;color:#111;width:47px;text-align:center;">工種ｺｰﾄﾞ</span>
<span id="t103" class="t" style="left:356.4px;top:153px;font-size:9.4px;line-height:14px;color:#111;width:35.4px;text-align:center;">取/臨</span>
<span id="t104" class="t" style="left:391.8px;top:153px;font-size:9.4px;line-height:14px;color:#111;width:99.8px;text-align:center;">名称下段</span>
<span id="t105" class="t" style="left:491.6px;top:153px;font-size:9.4px;line-height:14px;color:#111;width:82.7px;text-align:center;">仕様下段</span>
<span id="t106" class="t" style="left:574.3px;top:153px;font-size:9.4px;line-height:14px;color:#111;width:63px;text-align:center;">数量</span>
<span id="t107" class="t" style="left:637.3px;top:153px;font-size:9.4px;line-height:14px;color:#111;width:40px;text-align:center;">単位</span>
<span id="t108" class="t" style="left:677.3px;top:153px;font-size:9.4px;line-height:14px;color:#111;width:64.2px;text-align:center;">単価</span>
<span id="t109" class="t" style="left:741.5px;top:153px;font-size:9.4px;line-height:14px;color:#111;width:76.7px;text-align:center;">金額</span>
<div style="left:0;top:0;width:936px;height:554.8px;overflow:hidden;">
<div style="left:268.8px;top:167.6px;width:576.6px;height:387.2px;background:#fefdff;"></div>
<div style="left:309.4px;top:167.6px;width:1px;height:387.2px;background:#e3e3f8;"></div>
<div style="left:356.4px;top:167.6px;width:1px;height:387.2px;background:#e3e3f8;"></div>
<div style="left:391.8px;top:167.6px;width:1px;height:387.2px;background:#e3e3f8;"></div>
<div style="left:574.3px;top:167.6px;width:1px;height:387.2px;background:#e3e3f8;"></div>
<div style="left:637.3px;top:167.6px;width:1px;height:387.2px;background:#e3e3f8;"></div>
<div style="left:677.3px;top:167.6px;width:1px;height:387.2px;background:#e3e3f8;"></div>
<div style="left:741.5px;top:167.6px;width:1px;height:387.2px;background:#e3e3f8;"></div>
<div style="left:818.2px;top:167.6px;width:1px;height:387.2px;background:#e3e3f8;"></div>
<div style="left:309.4px;top:167.6px;width:1px;height:387.2px;background:#f5f4fd;"></div>
<div style="left:268.8px;top:198px;width:576.6px;height:1px;background:#e4e4f1;"></div>
<span id="t110" class="t n" style="left:268.8px;top:176.75px;font-size:10.4px;line-height:14px;color:#222;width:34.6px;text-align:right;">1</span>
<span id="t111" class="t n" style="left:311.2px;top:184.55px;font-size:10px;line-height:14px;color:#333;">202</span>
<span id="t112" class="t" style="left:365px;top:184.55px;font-size:9.4px;line-height:14px;color:#111;letter-spacing:-0.38px;">臨時</span>
<span id="t113" class="t" style="left:395px;top:184.55px;font-size:9.4px;line-height:14px;color:#111;">根切り</span>
<span id="t114" class="t n" style="left:574.2px;top:184.55px;font-size:10.2px;line-height:14px;color:#2a2a2a;width:60.6px;text-align:right;">585.000</span>
<span id="t115" class="t n" style="left:650px;top:184.55px;font-size:10.2px;line-height:14px;color:#2a2a2a;">m3</span>
<span id="t116" class="t n" style="left:677.6px;top:184.55px;font-size:10.2px;line-height:14px;color:#2a2a2a;width:61.8px;text-align:right;">600</span>
<span id="t117" class="t n" style="left:742px;top:184.55px;font-size:10.2px;line-height:14px;color:#2a2a2a;width:74.4px;text-align:right;">351,000</span>
<div style="left:268.8px;top:229.35px;width:576.6px;height:1px;background:#e4e4f1;"></div>
<span id="t118" class="t n" style="left:268.8px;top:208.1px;font-size:10.4px;line-height:14px;color:#222;width:34.6px;text-align:right;">2</span>
<span id="t119" class="t n" style="left:311.2px;top:215.9px;font-size:10px;line-height:14px;color:#333;">202</span>
<span id="t120" class="t" style="left:365px;top:215.9px;font-size:9.4px;line-height:14px;color:#111;letter-spacing:-0.38px;">臨時</span>
<span id="t121" class="t" style="left:395px;top:215.9px;font-size:9.4px;line-height:14px;color:#111;">残土処分</span>
<span id="t122" class="t n" style="left:574.2px;top:215.9px;font-size:10.2px;line-height:14px;color:#2a2a2a;width:60.6px;text-align:right;">415.000</span>
<span id="t123" class="t n" style="left:650px;top:215.9px;font-size:10.2px;line-height:14px;color:#2a2a2a;">m3</span>
<span id="t124" class="t n" style="left:677.6px;top:215.9px;font-size:10.2px;line-height:14px;color:#2a2a2a;width:61.8px;text-align:right;">3,400</span>
<span id="t125" class="t n" style="left:742px;top:215.9px;font-size:10.2px;line-height:14px;color:#2a2a2a;width:74.4px;text-align:right;">1,411,000</span>
<div style="left:268.8px;top:260.7px;width:576.6px;height:1px;background:#e4e4f1;"></div>
<span id="t126" class="t n" style="left:268.8px;top:239.45px;font-size:10.4px;line-height:14px;color:#222;width:34.6px;text-align:right;">3</span>
<span id="t127" class="t n" style="left:311.2px;top:247.25px;font-size:10px;line-height:14px;color:#333;">202</span>
<span id="t128" class="t" style="left:365px;top:247.25px;font-size:9.4px;line-height:14px;color:#111;letter-spacing:-0.38px;">臨時</span>
<span id="t129" class="t" style="left:395px;top:247.25px;font-size:9.4px;line-height:14px;color:#111;">埋戻し</span>
<span id="t130" class="t n" style="left:574.2px;top:247.25px;font-size:10.2px;line-height:14px;color:#2a2a2a;width:60.6px;text-align:right;">170.000</span>
<span id="t131" class="t n" style="left:650px;top:247.25px;font-size:10.2px;line-height:14px;color:#2a2a2a;">m3</span>
<span id="t132" class="t n" style="left:677.6px;top:247.25px;font-size:10.2px;line-height:14px;color:#2a2a2a;width:61.8px;text-align:right;">2,800</span>
<span id="t133" class="t n" style="left:742px;top:247.25px;font-size:10.2px;line-height:14px;color:#2a2a2a;width:74.4px;text-align:right;">476,000</span>
<div style="left:268.8px;top:292.05px;width:576.6px;height:1px;background:#e4e4f1;"></div>
<span id="t134" class="t n" style="left:268.8px;top:270.8px;font-size:10.4px;line-height:14px;color:#222;width:34.6px;text-align:right;">4</span>
<span id="t135" class="t n" style="left:311.2px;top:278.6px;font-size:10px;line-height:14px;color:#333;">202</span>
<span id="t136" class="t" style="left:365px;top:278.6px;font-size:9.4px;line-height:14px;color:#111;letter-spacing:-0.38px;">臨時</span>
<span id="t137" class="t" style="left:395px;top:278.6px;font-size:9.4px;line-height:14px;color:#111;">砕石地業</span>
<span id="t138" class="t n" style="left:574.2px;top:278.6px;font-size:10.2px;line-height:14px;color:#2a2a2a;width:60.6px;text-align:right;">117.000</span>
<span id="t139" class="t n" style="left:650px;top:278.6px;font-size:10.2px;line-height:14px;color:#2a2a2a;">m3</span>
<span id="t140" class="t n" style="left:677.6px;top:278.6px;font-size:10.2px;line-height:14px;color:#2a2a2a;width:61.8px;text-align:right;">1,500</span>
<span id="t141" class="t n" style="left:742px;top:278.6px;font-size:10.2px;line-height:14px;color:#2a2a2a;width:74.4px;text-align:right;">175,500</span>
<div style="left:268.8px;top:323.4px;width:576.6px;height:1px;background:#e4e4f1;"></div>
<span id="t142" class="t n" style="left:268.8px;top:302.15px;font-size:10.4px;line-height:14px;color:#222;width:34.6px;text-align:right;">5</span>
<span id="t143" class="t n" style="left:311.2px;top:309.95px;font-size:10px;line-height:14px;color:#333;">202</span>
<span id="t144" class="t" style="left:365px;top:309.95px;font-size:9.4px;line-height:14px;color:#111;letter-spacing:-0.38px;">臨時</span>
<span id="t145" class="t" style="left:395px;top:309.95px;font-size:9.4px;line-height:14px;color:#111;letter-spacing:0.44px;">ﾎﾟﾘｴﾁﾚﾝﾌｨﾙﾑ敷</span>
<span id="t146" class="t n" style="left:574.2px;top:309.95px;font-size:10.2px;line-height:14px;color:#2a2a2a;width:60.6px;text-align:right;">626.000</span>
<span id="t147" class="t n" style="left:650px;top:309.95px;font-size:10.2px;line-height:14px;color:#2a2a2a;">m2</span>
<span id="t148" class="t n" style="left:677.6px;top:309.95px;font-size:10.2px;line-height:14px;color:#2a2a2a;width:61.8px;text-align:right;">50</span>
<span id="t149" class="t n" style="left:742px;top:309.95px;font-size:10.2px;line-height:14px;color:#2a2a2a;width:74.4px;text-align:right;">31,300</span>
<div style="left:268.8px;top:354.75px;width:576.6px;height:1px;background:#e4e4f1;"></div>
<span id="t150" class="t n" style="left:268.8px;top:333.5px;font-size:10.4px;line-height:14px;color:#222;width:34.6px;text-align:right;">6</span>
<span id="t151" class="t n" style="left:311.2px;top:341.3px;font-size:10px;line-height:14px;color:#333;">202</span>
<span id="t152" class="t" style="left:365px;top:341.3px;font-size:9.4px;line-height:14px;color:#111;letter-spacing:-0.38px;">臨時</span>
<span id="t153" class="t" style="left:395px;top:341.3px;font-size:9.4px;line-height:14px;color:#111;">砕石地業</span>
<span id="t154" class="t n" style="left:495px;top:341.3px;font-size:10px;line-height:14px;color:#2a2a2a;letter-spacing:0.35px;">t=0.15</span>
<span id="t155" class="t n" style="left:574.2px;top:341.3px;font-size:10.2px;line-height:14px;color:#2a2a2a;width:60.6px;text-align:right;">117.000</span>
<span id="t156" class="t n" style="left:650px;top:341.3px;font-size:10.2px;line-height:14px;color:#2a2a2a;">m3</span>
<span id="t157" class="t n" style="left:677.6px;top:341.3px;font-size:10.2px;line-height:14px;color:#2a2a2a;width:61.8px;text-align:right;">4,000</span>
<span id="t158" class="t n" style="left:742px;top:341.3px;font-size:10.2px;line-height:14px;color:#2a2a2a;width:74.4px;text-align:right;">468,000</span>
<div style="left:268.8px;top:386.1px;width:576.6px;height:1px;background:#e4e4f1;"></div>
<span id="t159" class="t n" style="left:268.8px;top:364.85px;font-size:10.4px;line-height:14px;color:#222;width:34.6px;text-align:right;">※7</span>
<span id="t160" class="t n" style="left:311.2px;top:372.65px;font-size:10px;line-height:14px;color:#333;">202</span>
<div style="left:268.8px;top:417.45px;width:576.6px;height:1px;background:#e4e4f1;"></div>
<span id="t161" class="t n" style="left:268.8px;top:396.2px;font-size:10.4px;line-height:14px;color:#222;width:34.6px;text-align:right;">8</span>
<span id="t162" class="t n" style="left:311.2px;top:404px;font-size:10px;line-height:14px;color:#333;">202</span>
<span id="t163" class="t" style="left:365px;top:404px;font-size:9.4px;line-height:14px;color:#111;letter-spacing:-0.38px;">臨時</span>
<span id="t164" class="t" style="left:395px;top:404px;font-size:9.4px;line-height:14px;color:#111;">水替費用</span>
<span id="t165" class="t n" style="left:574.2px;top:404px;font-size:10.2px;line-height:14px;color:#2a2a2a;width:60.6px;text-align:right;">778.000</span>
<span id="t166" class="t n" style="left:650px;top:404px;font-size:10.2px;line-height:14px;color:#2a2a2a;">m2</span>
<span id="t167" class="t n" style="left:677.6px;top:404px;font-size:10.2px;line-height:14px;color:#2a2a2a;width:61.8px;text-align:right;">100</span>
<span id="t168" class="t n" style="left:742px;top:404px;font-size:10.2px;line-height:14px;color:#2a2a2a;width:74.4px;text-align:right;">77,800</span>
<div style="left:268.8px;top:448.8px;width:576.6px;height:1px;background:#e4e4f1;"></div>
<span id="t169" class="t n" style="left:268.8px;top:427.55px;font-size:10.4px;line-height:14px;color:#222;width:34.6px;text-align:right;">9</span>
<span id="t170" class="t n" style="left:311.2px;top:435.35px;font-size:10px;line-height:14px;color:#333;">202</span>
<span id="t171" class="t" style="left:365px;top:435.35px;font-size:9.4px;line-height:14px;color:#111;letter-spacing:-0.38px;">臨時</span>
<span id="t172" class="t" style="left:395px;top:435.35px;font-size:9.4px;line-height:14px;color:#111;">機械器具損料</span>
<span id="t173" class="t n" style="left:574.2px;top:435.35px;font-size:10.2px;line-height:14px;color:#2a2a2a;width:60.6px;text-align:right;">778.000</span>
<span id="t174" class="t n" style="left:650px;top:435.35px;font-size:10.2px;line-height:14px;color:#2a2a2a;">m2</span>
<span id="t175" class="t n" style="left:677.6px;top:435.35px;font-size:10.2px;line-height:14px;color:#2a2a2a;width:61.8px;text-align:right;">50</span>
<span id="t176" class="t n" style="left:742px;top:435.35px;font-size:10.2px;line-height:14px;color:#2a2a2a;width:74.4px;text-align:right;">38,900</span>
<div style="left:268.8px;top:480.15px;width:576.6px;height:1px;background:#e4e4f1;"></div>
<span id="t177" class="t n" style="left:268.8px;top:458.9px;font-size:10.4px;line-height:14px;color:#222;width:34.6px;text-align:right;">10</span>
<span id="t178" class="t n" style="left:311.2px;top:466.7px;font-size:10px;line-height:14px;color:#333;">202</span>
<span id="t179" class="t" style="left:365px;top:466.7px;font-size:9.4px;line-height:14px;color:#111;letter-spacing:-0.38px;">臨時</span>
<span id="t180" class="t" style="left:395px;top:466.7px;font-size:9.4px;line-height:14px;color:#111;">消耗資材</span>
<span id="t181" class="t n" style="left:574.2px;top:466.7px;font-size:10.2px;line-height:14px;color:#2a2a2a;width:60.6px;text-align:right;">778.000</span>
<span id="t182" class="t n" style="left:650px;top:466.7px;font-size:10.2px;line-height:14px;color:#2a2a2a;">m2</span>
<span id="t183" class="t n" style="left:677.6px;top:466.7px;font-size:10.2px;line-height:14px;color:#2a2a2a;width:61.8px;text-align:right;">50</span>
<span id="t184" class="t n" style="left:742px;top:466.7px;font-size:10.2px;line-height:14px;color:#2a2a2a;width:74.4px;text-align:right;">38,900</span>
<div style="left:268.8px;top:511.5px;width:576.6px;height:1px;background:#e4e4f1;"></div>
<span id="t185" class="t n" style="left:268.8px;top:490.25px;font-size:10.4px;line-height:14px;color:#222;width:34.6px;text-align:right;">11</span>
<span id="t186" class="t n" style="left:311.2px;top:498.05px;font-size:10px;line-height:14px;color:#333;">202</span>
<span id="t187" class="t" style="left:365px;top:498.05px;font-size:9.4px;line-height:14px;color:#111;letter-spacing:-0.38px;">臨時</span>
<span id="t188" class="t" style="left:395px;top:498.05px;font-size:9.4px;line-height:14px;color:#111;">運送費</span>
<span id="t189" class="t n" style="left:574.2px;top:498.05px;font-size:10.2px;line-height:14px;color:#2a2a2a;width:60.6px;text-align:right;">778.000</span>
<span id="t190" class="t n" style="left:650px;top:498.05px;font-size:10.2px;line-height:14px;color:#2a2a2a;">m2</span>
<span id="t191" class="t n" style="left:677.6px;top:498.05px;font-size:10.2px;line-height:14px;color:#2a2a2a;width:61.8px;text-align:right;">30</span>
<span id="t192" class="t n" style="left:742px;top:498.05px;font-size:10.2px;line-height:14px;color:#2a2a2a;width:74.4px;text-align:right;">23,340</span>
<div style="left:268.8px;top:542.85px;width:576.6px;height:1px;background:#e4e4f1;"></div>
<span id="t193" class="t n" style="left:268.8px;top:521.6px;font-size:10.4px;line-height:14px;color:#222;width:34.6px;text-align:right;">12</span>
<span id="t194" class="t n" style="left:311.2px;top:529.4px;font-size:10px;line-height:14px;color:#333;">202</span>
<span id="t195" class="t" style="left:365px;top:529.4px;font-size:9.4px;line-height:14px;color:#111;letter-spacing:-0.38px;">臨時</span>
<span id="t196" class="t" style="left:395px;top:529.4px;font-size:9.4px;line-height:14px;color:#111;letter-spacing:0.52px;">ﾎﾟﾘｴﾁﾚﾝﾌｨﾙﾑ</span>
<span id="t197" class="t n" style="left:495px;top:529.4px;font-size:10px;line-height:14px;color:#2a2a2a;letter-spacing:0.35px;">t=0.15</span>
<span id="t198" class="t n" style="left:574.2px;top:529.4px;font-size:10.2px;line-height:14px;color:#2a2a2a;width:60.6px;text-align:right;">626.000</span>
<span id="t199" class="t n" style="left:650px;top:529.4px;font-size:10.2px;line-height:14px;color:#2a2a2a;">m2</span>
<span id="t200" class="t n" style="left:677.6px;top:529.4px;font-size:10.2px;line-height:14px;color:#2a2a2a;width:61.8px;text-align:right;">50</span>
<span id="t201" class="t n" style="left:742px;top:529.4px;font-size:10.2px;line-height:14px;color:#2a2a2a;width:74.4px;text-align:right;">31,300</span>
</div>
<div style="left:491.2px;top:105.6px;width:1.2px;height:25.6px;background:#7f89cb;"></div>
<div style="left:491.2px;top:135px;width:1.2px;height:419.8px;background:#7f89cb;"></div>
<div style="left:845.6px;top:135px;width:12.6px;height:419.8px;background:#fbfbff;border:1px solid #d4e4f8;box-sizing:border-box;"></div>
<div style="left:845.6px;top:135px;width:12.6px;height:12px;background:linear-gradient(90deg,#eef5fe,#d9eafc 45%,#b9d9f8 55%,#cfe5fb);border:1px solid #b9d5f3;box-sizing:border-box;border-radius:2px;"></div>
<svg style="left:847.9px;top:137px;width:8px;height:8px" viewBox="-4 -4 8 8"><path d="M-3.1 1.5L0 -1.6L3.1 1.5" stroke="#2c60c0" stroke-width="1.6" fill="none"/></svg>
<div style="left:845.6px;top:147.2px;width:12.6px;height:295.4px;background:linear-gradient(90deg,#e9f3fe 0%,#e2effd 40%,#a9d3f8 50%,#c4e0fa 100%);border:1px solid #b4d2f2;box-sizing:border-box;border-radius:2px;"></div>
<div style="left:849px;top:292.8px;width:5.8px;height:1px;background:#4d78c6;"></div>
<div style="left:849px;top:295px;width:5.8px;height:1px;background:#4d78c6;"></div>
<div style="left:845.6px;top:543.8px;width:12.6px;height:11px;background:linear-gradient(90deg,#eef5fe,#d9eafc 45%,#b9d9f8 55%,#cfe5fb);border:1px solid #b9d5f3;box-sizing:border-box;border-radius:2px;"></div>
<svg style="left:847.9px;top:545.3px;width:8px;height:8px" viewBox="-4 -4 8 8"><path d="M-3.1 -1.5L0 1.6L3.1 -1.5" stroke="#2c60c0" stroke-width="1.6" fill="none"/></svg>
<div style="left:268.8px;top:555.2px;width:576.2px;height:12.8px;background:#fbfbff;border:1px solid #d4e4f8;box-sizing:border-box;"></div>
<div style="left:268.8px;top:555.2px;width:11.6px;height:12.8px;background:linear-gradient(#eef5fe,#d9eafc 45%,#b9d9f8 55%,#cfe5fb);border:1px solid #b9d5f3;box-sizing:border-box;border-radius:2px;"></div>
<svg style="left:270.6px;top:557.6px;width:8px;height:8px" viewBox="-4 -4 8 8"><path d="M1.5 -3.1L-1.6 0L1.5 3.1" stroke="#2c60c0" stroke-width="1.6" fill="none"/></svg>
<div style="left:280.8px;top:555.2px;width:289.4px;height:12.8px;background:linear-gradient(#e9f3fe 0%,#e2effd 40%,#a9d3f8 50%,#c4e0fa 100%);border:1px solid #b4d2f2;box-sizing:border-box;border-radius:2px;"></div>
<div style="left:423.8px;top:559.2px;width:0.9px;height:4.8px;background:#4d78c6;"></div>
<div style="left:425.6px;top:559.2px;width:0.9px;height:4.8px;background:#4d78c6;"></div>
<div style="left:427.4px;top:559.2px;width:0.9px;height:4.8px;background:#4d78c6;"></div>
<div style="left:833.4px;top:555.2px;width:11.4px;height:12.8px;background:linear-gradient(#eef5fe,#d9eafc 45%,#b9d9f8 55%,#cfe5fb);border:1px solid #b9d5f3;box-sizing:border-box;border-radius:2px;"></div>
<svg style="left:835.1px;top:557.6px;width:8px;height:8px" viewBox="-4 -4 8 8"><path d="M-1.5 -3.1L1.6 0L-1.5 3.1" stroke="#2c60c0" stroke-width="1.6" fill="none"/></svg>
</div>
</body></html>
